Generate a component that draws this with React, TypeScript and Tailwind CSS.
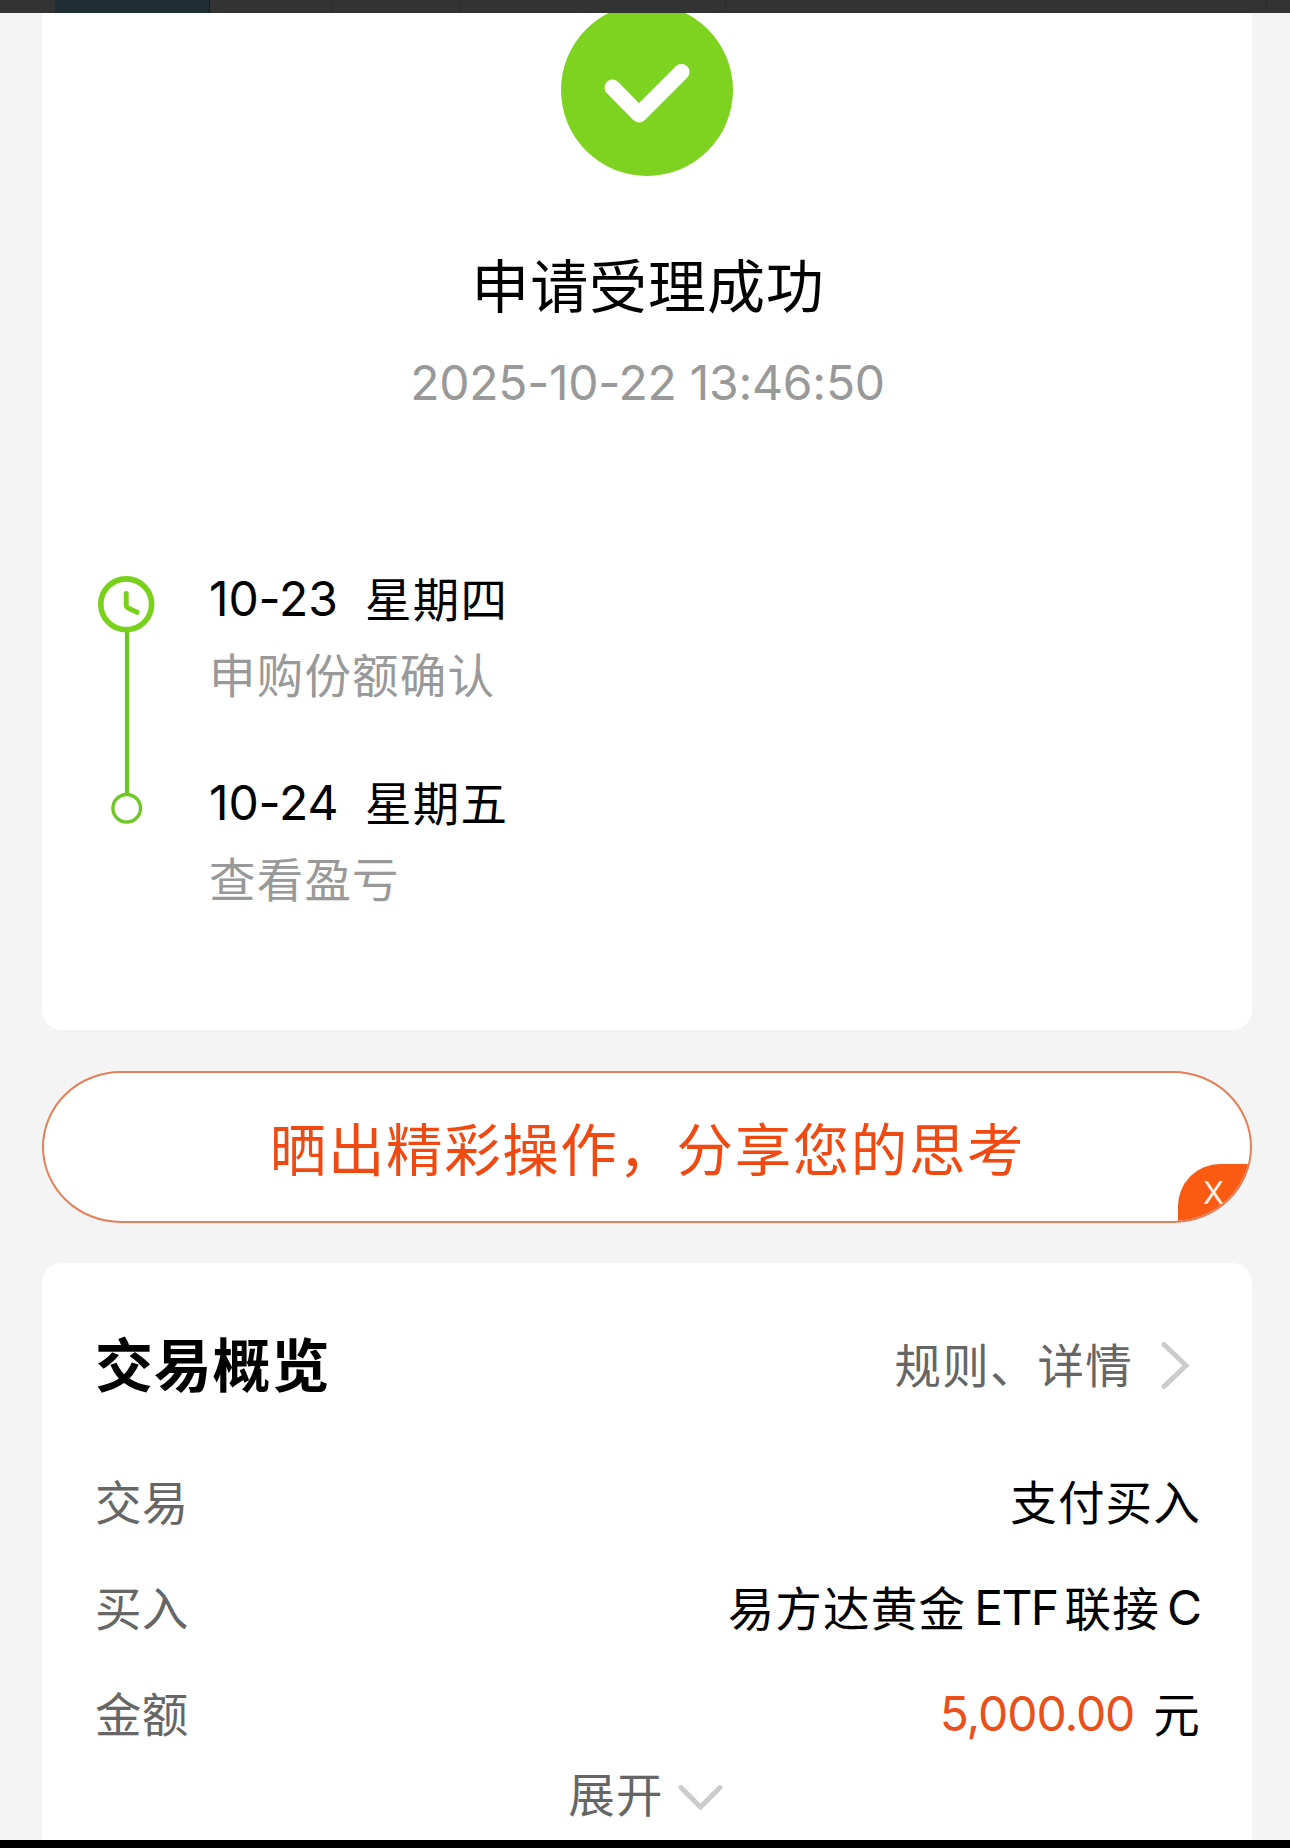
import type { ReactNode } from "react";

const steps = [
  { date: "10-23", day: "星期四", text: "申购份额确认" },
  { date: "10-24", day: "星期五", text: "查看盈亏" },
];

function Row({ label, children }: { label: string; children: ReactNode }) {
  return (
    <div className="flex h-[106px] items-center justify-between">
      <span className="tracking-[0.2px] text-[#666]">{label}</span>
      <span className="flex items-center text-black">{children}</span>
    </div>
  );
}

function Timeline() {
  return (
    <svg width="60" height="260" viewBox="0 0 60 260" fill="none" className="shrink-0">
      <path d="M31 57V218" stroke="#6cc722" strokeWidth="4.2" />
      <circle cx="30.2" cy="29.3" r="25.4" stroke="#79d11c" strokeWidth="5.6" />
      <path
        d="M30.2 18.5V30.5Q30.2 32 31.6 32.7L41 37.3"
        stroke="#79d11c"
        strokeWidth="5"
        strokeLinecap="round"
      />
      <circle cx="30.7" cy="233.3" r="13.8" stroke="#6fc826" strokeWidth="3.4" />
    </svg>
  );
}

export default function App() {
  return (
    <div className="flex h-[1848px] w-[1290px] flex-col overflow-hidden bg-[#f4f4f4] font-['Inter','Noto_Sans_CJK_SC',sans-serif] leading-none">
      {/* dimmed strip of the page behind */}
      <div className="flex h-[13px] shrink-0 bg-[#333]">
        <div className="ml-[55px] h-full w-[155px] border-r border-[#151d22] bg-[#1f2d35]" />
        <div className="h-full w-[122px] border-r border-[#2c2c2c]" />
        <div className="h-full w-[128px] border-r border-[#2c2c2c]" />
        <div className="h-full w-[266px] border-r border-[#2c2c2c]" />
        <div className="h-full w-[541px] border-r border-[#2c2c2c]" />
      </div>

      <div className="mr-[38px] ml-[42px] h-[1017px] shrink-0 overflow-hidden rounded-b-[20px] bg-white">
        <div className="flex flex-col items-center">
          <svg width="172" height="172" viewBox="0 0 172 172" fill="none" className="-mt-[9px]">
            <circle cx="86" cy="86" r="86" fill="#7ed321" />
            <path
              d="M51.5 83.5L78 110.5L120.5 68"
              stroke="#fff"
              strokeWidth="16"
              strokeLinecap="round"
              strokeLinejoin="round"
            />
          </svg>
          <h1 className="mt-[82px] ml-[2px] text-[58px] tracking-[0.9px] text-black">申请受理成功</h1>
          <p className="mt-[43px] ml-[1px] text-[48px] tracking-[-0.25px] text-[#999]">
            2025-10-22 13:46:50
          </p>
        </div>

        <div className="mt-[168px] ml-[54px] flex">
          <Timeline />
          <div className="ml-[53px] flex flex-col">
            {steps.map((s) => (
              <div key={s.date} className="h-[204px]">
                <div className="flex h-[48px] items-center text-[46.5px] tracking-[1.2px] text-black">
                  <span className="w-[156px] text-[48px] tracking-[-0.1px]">{s.date}</span>
                  <span className="pt-[3px]">{s.day}</span>
                </div>
                <div className="mt-[30px] text-[46.5px] tracking-[1.2px] text-[#999]">{s.text}</div>
              </div>
            ))}
          </div>
        </div>
      </div>

      <div className="relative mt-[41px] mr-[38px] ml-[42px] flex h-[152px] shrink-0 items-center justify-center overflow-hidden rounded-[79px/76px] border-2 border-[#e57f58] bg-white">
        <span className="pt-[8px] pl-[1px] text-[56.5px] tracking-[1.6px] text-[#f04a12]">
          晒出精彩操作，分享您的思考
        </span>
        <button className="absolute right-0 bottom-0 h-[57px] w-[72px] rounded-tl-[42px] bg-[#fb5a12] pr-[1px] text-[31px] text-[#fff1e6]">
          X
        </button>
      </div>

      <div className="mt-[40px] mr-[38px] ml-[42px] h-[577px] shrink-0 rounded-t-[20px] bg-white pr-[51px] pl-[53px] text-[46.5px] tracking-[1.2px]">
        <div className="flex h-[206px] items-center justify-between">
          <h2 className="text-[58px] font-bold tracking-[0.8px] text-black">交易概览</h2>
          <span className="flex items-center text-[#666]">
            规则、详情
            <svg width="32" height="50" viewBox="0 0 32 50" fill="none" className="mr-[9px] mb-[3px] ml-[27px]">
              <path d="M4 4.5L26 25.5L4 46.5" stroke="#ccc" strokeWidth="5" strokeLinecap="round" />
            </svg>
          </span>
        </div>

        <div className="-mt-[19px]">
          <Row label="交易">支付买入</Row>
          <Row label="买入">
            易方达黄金
            <span className="mr-[7px] ml-[8px] pb-[3px] text-[48px] tracking-[-1.6px]">ETF</span>
            联接
            <span className="ml-[7px] pb-[3px] text-[48px] tracking-[-1px]">C</span>
          </Row>
          <Row label="金额">
            <span className="mr-[19px] pb-[3px] text-[48px] tracking-[-1.1px] text-[#e9501b]">
              5,000.00
            </span>
            元
          </Row>
        </div>

        <div className="flex items-center justify-center pt-[4px] pr-[5px] text-[#666]">
          展开
          <svg width="46" height="30" viewBox="0 0 46 30" fill="none" className="mt-[4px] ml-[13px]">
            <path d="M4 5.5L23.5 25L43 5.5" stroke="#ccc" strokeWidth="5" strokeLinecap="round" />
          </svg>
        </div>
      </div>

      <div className="h-[8px] shrink-0 bg-black" />
    </div>
  );
}
